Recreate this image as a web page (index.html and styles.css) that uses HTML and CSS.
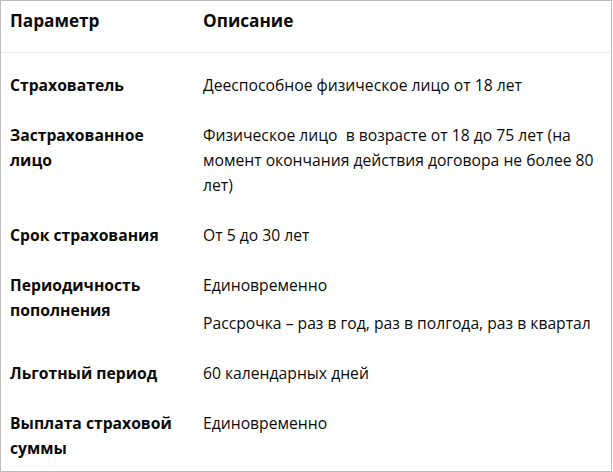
FILE: index.html
```html
<!DOCTYPE html>
<html lang="ru">
<head>
<meta charset="utf-8">
<link rel="stylesheet" href="styles.css">
</head>
<body>
<div class="frame">
  <div class="head">
    <div class="hcell">Параметр</div>
    <div class="hcell">Описание</div>
  </div>
  <div class="rows">
    <div class="row">
      <div class="param">Страхователь</div>
      <div class="desc"><p>Дееспособное физическое лицо от 18 лет</p></div>
    </div>
    <div class="row">
      <div class="param">Застрахованное лицо</div>
      <div class="desc"><p>Физическое лицо&nbsp; в возрасте от 18 до 75 лет (на момент окончания действия договора не более 80 лет)</p></div>
    </div>
    <div class="row">
      <div class="param">Срок страхования</div>
      <div class="desc"><p>От 5 до 30 лет</p></div>
    </div>
    <div class="row">
      <div class="param">Периодичность пополнения</div>
      <div class="desc"><p>Единовременно</p><p>Рассрочка – раз в год, раз в полгода, раз в квартал</p></div>
    </div>
    <div class="row">
      <div class="param">Льготный период</div>
      <div class="desc"><p>60 календарных дней</p></div>
    </div>
    <div class="row">
      <div class="param">Выплата страховой суммы</div>
      <div class="desc"><p>Единовременно</p></div>
    </div>
  </div>
</div>
</body>
</html>
```

FILE: styles.css
```css
html, body {
  margin: 0;
  padding: 0;
  background: #fff;
}
.frame {
  box-sizing: border-box;
  width: 612px;
  height: 472px;
  border: 1px solid #bcbcbc;
  overflow: hidden;
  font-family: "Open Sans", "Noto Sans", sans-serif;
  color: #0b0b0b;
}
.head {
  display: grid;
  grid-template-columns: 193px 1fr;
  padding: 7px 0 19px 9px;
  border-bottom: 1px solid #e8e8e8;
}
.hcell {
  font-size: 17.2px;
  font-weight: 700;
  line-height: 25px;
}
.rows {
  padding: 7.5px 0 0 9px;
}
.row {
  display: grid;
  grid-template-columns: 193px 1fr;
  padding: 12.5px 0;
  font-size: 15.7px;
  line-height: 25px;
}
.param {
  font-weight: 700;
  padding-right: 18px;
}
.desc {
  padding-right: 6px;
}
.desc p {
  margin: 0;
}
.desc p + p {
  margin-top: 13px;
}
```
